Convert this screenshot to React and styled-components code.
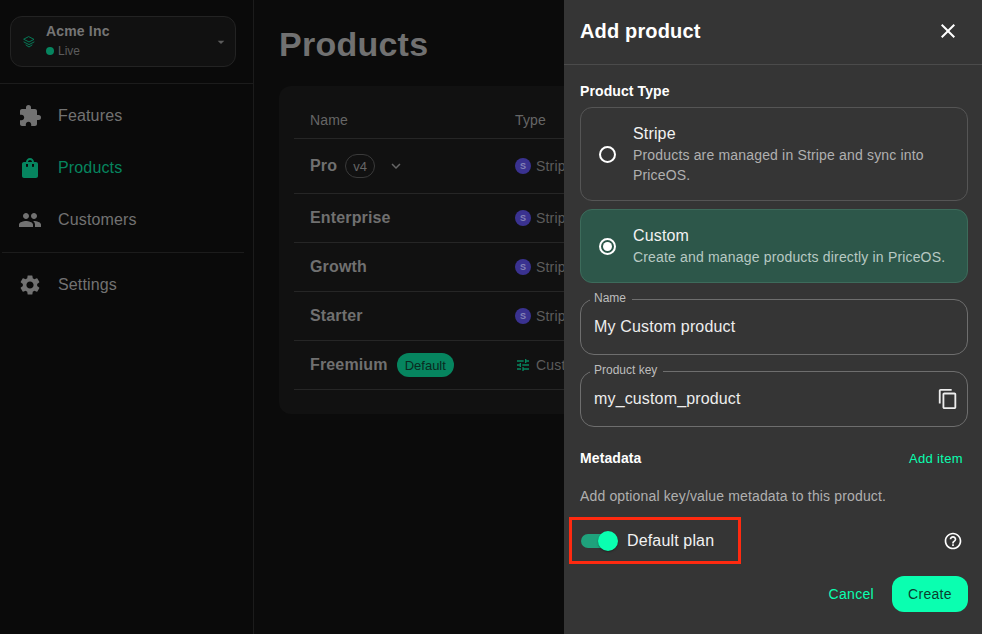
import React from "react";
import styled, { createGlobalStyle } from "styled-components";
import {
  MdExtension,
  MdShoppingBag,
  MdPeople,
  MdSettings,
  MdClose,
  MdOutlineContentCopy,
  MdOutlineHelpOutline,
  MdTune,
  MdKeyboardArrowDown,
  MdArrowDropDown,
} from "react-icons/md";

const GlobalStyle = createGlobalStyle`
  html, body {
    margin: 0;
    height: 100%;
    background: #0b0b0b;
    font-family: "Liberation Sans", Arial, sans-serif;
    overflow: hidden;
  }
  * { box-sizing: border-box; }
`;

const Page = styled.div`
  display: flex;
  height: 634px;
  width: 982px;
  position: relative;
  overflow: hidden;
`;

const Sidebar = styled.aside`
  width: 254px;
  flex-shrink: 0;
  background: #0a0a0a;
  border-right: 1px solid #1c1c1c;
`;

const SelectorWrap = styled.div`
  padding: 16px 17px 16px 10px;
  border-bottom: 1px solid #1c1c1c;
  height: 84px;
`;

const Selector = styled.div`
  height: 51px;
  border: 1px solid #232323;
  border-radius: 12px;
  background: #111;
  display: flex;
  align-items: center;
  padding: 0 6px 0 12px;
  color: #5c5c5c;
`;

const SelectorText = styled.div`
  flex: 1;
  margin-left: 11px;
  padding-bottom: 1px;
`;

const OrgName = styled.div`
  font-size: 14px;
  font-weight: 700;
  letter-spacing: 0.17px;
  line-height: 18px;
  margin-bottom: 1px;
  color: #757575;
`;

const Status = styled.div`
  display: flex;
  align-items: center;
  gap: 4px;
  font-size: 12px;
  line-height: 20px;
  color: #5c5c5c;
`;

const Dot = styled.span`
  width: 8px;
  height: 8px;
  border-radius: 50%;
  background: #06855f;
`;

const NavList = styled.nav`
  padding: 6px 0 0;
`;

const NavItem = styled.div`
  height: 52px;
  display: flex;
  align-items: center;
  gap: 16px;
  padding-left: 18px;
  font-size: 16px;
  letter-spacing: 0.15px;
  color: ${(p) => (p.$active ? "#06855f" : "#727272")};
`;

const NavDivider = styled.div`
  height: 1px;
  background: #1c1c1c;
  margin: 6px 9px 6px 2px;
`;

const Main = styled.main`
  flex: 1;
  min-width: 0;
  padding: 22px 25px;
  background: #0b0b0b;
`;

const Title = styled.h1`
  margin: 0 0 20px;
  font-size: 34px;
  letter-spacing: 0.25px;
  line-height: 44px;
  font-weight: 700;
  color: #717171;
`;

const TableCard = styled.div`
  background: #111;
  border-radius: 12px;
  padding: 0 15px 24px;
  width: 680px;
`;

const Row = styled.div`
  display: grid;
  grid-template-columns: 205px 1fr;
  align-items: center;
  height: ${(p) => p.$h || 49}px;
  border-bottom: 1px solid #262626;
  padding-left: 16px;
`;

const HeadCell = styled.div`
  font-size: 14px;
  letter-spacing: 0.17px;
  color: #666;
  padding-top: 16px;
`;

const NameCell = styled.div`
  display: flex;
  align-items: center;
  font-size: 16px;
  letter-spacing: 0.15px;
  font-weight: 700;
  color: #707070;
`;

const Version = styled.span`
  margin-left: 8px;
  width: 30px;
  height: 24px;
  border: 1px solid #3a3a3a;
  border-radius: 12px;
  display: flex;
  align-items: center;
  justify-content: center;
  font-size: 13px;
  letter-spacing: 0;
  font-weight: 400;
  color: #666;
`;

const Chevron = styled(MdKeyboardArrowDown)`
  margin-left: 12px;
  color: #666;
`;

const DefaultBadge = styled.span`
  margin-left: 9px;
  padding: 0 8px;
  height: 24px;
  border-radius: 12px;
  background: #06855f;
  display: flex;
  align-items: center;
  font-size: 13px;
  letter-spacing: 0;
  font-weight: 400;
  color: #0a2a20;
`;

const TypeCell = styled.div`
  display: flex;
  align-items: center;
  gap: 5px;
  font-size: 14px;
  letter-spacing: 0.17px;
  color: #5c5c5c;
`;

const StripeMark = styled.span`
  width: 16px;
  height: 16px;
  border-radius: 50%;
  background: #3a3290;
  color: #8582b5;
  display: flex;
  align-items: center;
  justify-content: center;
  font-size: 9px;
  font-weight: 700;
`;

const Panel = styled.section`
  position: absolute;
  top: 0;
  right: 0;
  bottom: 0;
  width: 418px;
  background: #353535;
  color: #fff;
  z-index: 2;
`;

const PanelHeader = styled.header`
  height: 65px;
  border-bottom: 1px solid #4b4b4b;
  padding: 0 22px 2px 16px;
  display: flex;
  align-items: center;
  justify-content: space-between;
`;

const PanelTitle = styled.h2`
  margin: 0;
  font-size: 20px;
  letter-spacing: 0.15px;
  font-weight: 700;
`;

const PanelBody = styled.div`
  padding: 17px 14px 0 16px;
`;

const SectionLabel = styled.div`
  font-size: 14px;
  letter-spacing: 0.1px;
  font-weight: 700;
  line-height: 18px;
`;

const OptionCard = styled.div`
  display: flex;
  align-items: center;
  height: ${(p) => p.$h}px;
  margin-top: ${(p) => p.$mt}px;
  border: 1px solid ${(p) => (p.$selected ? "#3d6b5b" : "#555")};
  border-radius: 12px;
  background: ${(p) => (p.$selected ? "#2d574a" : "transparent")};
  padding: 0 12px 0 18px;
`;

const Radio = styled.span`
  flex-shrink: 0;
  width: 17px;
  height: 17px;
  border: 2px solid #fff;
  border-radius: 50%;
  display: flex;
  align-items: center;
  justify-content: center;
  margin-right: 17px;
  &::after {
    content: "";
    display: ${(p) => (p.$on ? "block" : "none")};
    width: 9px;
    height: 9px;
    border-radius: 50%;
    background: #fff;
  }
`;

const OptionTitle = styled.div`
  font-size: 16px;
  letter-spacing: 0.15px;
  line-height: 22px;
  color: #f2f2f2;
`;

const OptionText = styled.div`
  font-size: 14px;
  letter-spacing: 0.17px;
  line-height: 20px;
  color: ${(p) => (p.$selected ? "#b8c9c3" : "#b0b0b0")};
`;

const Field = styled.fieldset`
  margin: 9px 0 0;
  padding: 0 8px 0 13px;
  height: 63px;
  border: 1px solid #6e6e6e;
  border-radius: 14px;
  display: block;
  position: relative;
`;

const FieldLegend = styled.legend`
  margin-left: -4px;
  padding: 0 6px 2px 4px;
  font-size: 12px;
  line-height: 12px;
  color: #bdbdbd;
`;

const FieldValue = styled.div`
  display: flex;
  align-items: center;
  justify-content: space-between;
  height: 42px;
  font-size: 16px;
  letter-spacing: 0.15px;
  color: #ededed;
`;

const MetaRow = styled.div`
  display: flex;
  align-items: center;
  justify-content: space-between;
  margin-top: 22px;
  padding-right: 5px;
`;

const AddLink = styled.span`
  font-size: 13px;
  letter-spacing: 0.35px;
  color: #0affb0;
`;

const MetaHint = styled.div`
  margin-top: 20px;
  font-size: 14px;
  letter-spacing: 0.15px;
  line-height: 18px;
  color: #b0b0b0;
`;

const ToggleRow = styled.div`
  display: flex;
  align-items: center;
  justify-content: space-between;
  margin-top: 12px;
  padding-right: 5px;
`;

const Highlight = styled.div`
  display: flex;
  align-items: center;
  width: 172px;
  height: 47px;
  margin-left: -11px;
  padding-left: 9px;
  border: 3px solid #ff2a10;
`;

const Toggle = styled.span`
  position: relative;
  width: 33px;
  height: 14px;
  border-radius: 7px;
  background: #1fa27c;
  margin-right: 13px;
  &::after {
    content: "";
    position: absolute;
    right: -4px;
    top: -3px;
    width: 20px;
    height: 20px;
    border-radius: 50%;
    background: #0affb0;
    box-shadow: 0 1px 2px rgba(0, 0, 0, 0.35);
  }
`;

const ToggleLabel = styled.span`
  font-size: 16px;
  letter-spacing: 0.15px;
  color: #f2f2f2;
`;

const Actions = styled.div`
  display: flex;
  align-items: center;
  justify-content: flex-end;
  gap: 18px;
  margin-top: 12px;
`;

const CancelButton = styled.button`
  border: 0;
  background: none;
  padding: 0;
  font: inherit;
  font-size: 14px;
  letter-spacing: 0.3px;
  color: #0affb0;
`;

const CreateButton = styled.button`
  border: 0;
  width: 76px;
  height: 36px;
  border-radius: 12px;
  background: #0affb0;
  font: inherit;
  font-size: 14px;
  letter-spacing: 0.3px;
  color: #0b3d2e;
`;

const NAV = [
  { label: "Features", icon: MdExtension },
  { label: "Products", icon: MdShoppingBag, active: true },
  { label: "Customers", icon: MdPeople },
];

const StackIcon = () => (
  <svg width="12" height="12" viewBox="0 0 12 12" fill="none" stroke="#06855f" strokeWidth="0.9" strokeLinejoin="round" strokeLinecap="round">
    <path d="M6 .8 11 3.4 6 6 1 3.4Z" />
    <path d="M1 6 6 8.6 11 6" />
    <path d="M3 9 6 11 9 9" />
  </svg>
);

const Stripe = () => (
  <TypeCell>
    <StripeMark>S</StripeMark>
    Stripe
  </TypeCell>
);

export default function App() {
  return (
    <>
      <GlobalStyle />
      <Page>
        <Sidebar>
          <SelectorWrap>
            <Selector>
              <StackIcon />
              <SelectorText>
                <OrgName>Acme Inc</OrgName>
                <Status>
                  <Dot />
                  Live
                </Status>
              </SelectorText>
              <MdArrowDropDown size={16} />
            </Selector>
          </SelectorWrap>
          <NavList>
            {NAV.map(({ label, icon: Icon, active }) => (
              <NavItem key={label} $active={active}>
                <Icon size={24} />
                {label}
              </NavItem>
            ))}
            <NavDivider />
            <NavItem>
              <MdSettings size={24} />
              Settings
            </NavItem>
          </NavList>
        </Sidebar>
        <Main>
          <Title>Products</Title>
          <TableCard>
            <Row $h={53}>
              <HeadCell>Name</HeadCell>
              <HeadCell>Type</HeadCell>
            </Row>
            <Row $h={55}>
              <NameCell>
                Pro
                <Version>v4</Version>
                <Chevron size={18} />
              </NameCell>
              <Stripe />
            </Row>
            <Row>
              <NameCell>Enterprise</NameCell>
              <Stripe />
            </Row>
            <Row>
              <NameCell>Growth</NameCell>
              <Stripe />
            </Row>
            <Row>
              <NameCell>Starter</NameCell>
              <Stripe />
            </Row>
            <Row>
              <NameCell>
                Freemium
                <DefaultBadge>Default</DefaultBadge>
              </NameCell>
              <TypeCell>
                <MdTune size={16} color="#06855f" />
                Custom
              </TypeCell>
            </Row>
          </TableCard>
        </Main>
        <Panel>
          <PanelHeader>
            <PanelTitle>Add product</PanelTitle>
            <MdClose size={24} />
          </PanelHeader>
          <PanelBody>
            <SectionLabel>Product Type</SectionLabel>
            <OptionCard $h={94} $mt={7}>
              <Radio />
              <div>
                <OptionTitle>Stripe</OptionTitle>
                <OptionText>
                  Products are managed in Stripe and sync into PriceOS.
                </OptionText>
              </div>
            </OptionCard>
            <OptionCard $h={74} $mt={8} $selected>
              <Radio $on />
              <div>
                <OptionTitle>Custom</OptionTitle>
                <OptionText $selected>
                  Create and manage products directly in PriceOS.
                </OptionText>
              </div>
            </OptionCard>
            <Field>
              <FieldLegend>Name</FieldLegend>
              <FieldValue>My Custom product</FieldValue>
            </Field>
            <Field>
              <FieldLegend>Product key</FieldLegend>
              <FieldValue>
                my_custom_product
                <MdOutlineContentCopy size={22} />
              </FieldValue>
            </Field>
            <MetaRow>
              <SectionLabel>Metadata</SectionLabel>
              <AddLink>Add item</AddLink>
            </MetaRow>
            <MetaHint>Add optional key/value metadata to this product.</MetaHint>
            <ToggleRow>
              <Highlight>
                <Toggle />
                <ToggleLabel>Default plan</ToggleLabel>
              </Highlight>
              <MdOutlineHelpOutline size={20} />
            </ToggleRow>
            <Actions>
              <CancelButton>Cancel</CancelButton>
              <CreateButton>Create</CreateButton>
            </Actions>
          </PanelBody>
        </Panel>
      </Page>
    </>
  );
}
